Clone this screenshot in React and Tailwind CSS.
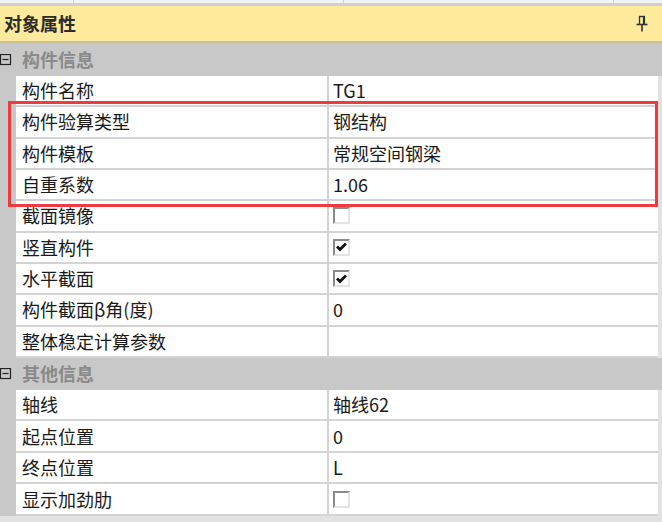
import { Fragment } from "react";

const font = { fontFamily: '"Noto Sans CJK SC", "Noto Sans", sans-serif' };

const groups = [
  {
    title: "构件信息",
    rowH: "h-[31.33px]",
    rows: [
      { name: "构件名称", value: "TG1" },
      { name: "构件验算类型", value: "钢结构", mark: "start" },
      { name: "构件模板", value: "常规空间钢梁" },
      { name: "自重系数", value: "1.06", mark: "end" },
      { name: "截面镜像", check: false },
      { name: "竖直构件", check: true },
      { name: "水平截面", check: true },
      { name: "构件截面β角(度)", value: "0" },
      { name: "整体稳定计算参数", value: "" },
    ],
  },
  {
    title: "其他信息",
    rowH: "h-[31.5px]",
    rows: [
      { name: "轴线", value: "轴线62" },
      { name: "起点位置", value: "0" },
      { name: "终点位置", value: "L" },
      { name: "显示加劲肋", check: false },
    ],
  },
];

function Checkbox({ checked }) {
  return (
    <span className="w-[17px] h-[17px] border-2 border-t-[#8a8a8a] border-l-[#8a8a8a] border-b-[#e4e4e4] border-r-[#e4e4e4] bg-white flex items-center justify-center">
      {checked && (
        <svg width="11" height="10" viewBox="0 0 11 10">
          <path d="M1 4.5 L4 7.5 L10 1.5" fill="none" stroke="#111" strokeWidth="2.8" />
        </svg>
      )}
    </span>
  );
}

function Row({ row, h }) {
  return (
    <div className={`flex ${h} bg-[#c8c8c8]`}>
      <div className="w-[16px] shrink-0" />
      <div className="flex flex-1 bg-white border-b-2 border-[#d3d3d3]">
        <div className="w-[313px] shrink-0 flex items-center pl-[6px] border-r-2 border-[#d3d3d3] text-[18px] text-[#1a1a1a]">
          {row.name}
        </div>
        <div className="flex-1 flex items-center pl-[4px] text-[18px] text-[#1a1a1a]">
          {"check" in row ? <Checkbox checked={row.check} /> : row.value}
        </div>
      </div>
      <div className="w-[4px] shrink-0 bg-[#e2e2e2]" />
    </div>
  );
}

function GroupHeader({ title, h }) {
  return (
    <div className={`flex items-center ${h} bg-[#c8c8c8]`}>
      <svg width="12" height="12" viewBox="0 0 12 12" className="shrink-0">
        <rect x="0.5" y="0.5" width="10" height="10" fill="none" stroke="#222" strokeWidth="1.2" />
        <path d="M2.5 5.5 H8.5" stroke="#222" strokeWidth="1.2" />
      </svg>
      <span className="ml-[10px] text-[18px] font-bold text-[#8a8a8a]">{title}</span>
    </div>
  );
}

export default function App() {
  return (
    <div className="w-[662px] h-[522px] overflow-hidden bg-[#e2e2e2]" style={font}>
      {/* tab strip remnant */}
      <div className="h-[3px] bg-[#f4f4f4] flex">
        <div className="ml-[73px] w-px bg-[#e6d270]" />
        <div className="ml-[269px] w-px bg-[#e6d270]" />
        <div className="ml-[269px] w-px bg-[#e6d270]" />
      </div>
      <div className="h-[3px] bg-[#cfcfcf]" />

      {/* title bar */}
      <div className="h-[37px] bg-[#fdea9d] border-b-2 border-[#c9c09a] flex items-center justify-between pl-[4px] pr-[14px]">
        <span className="text-[18px] font-bold text-[#2b2b2b]">对象属性</span>
        <svg width="12" height="17" viewBox="0 0 12 17">
          <path d="M3 1.5 H9" stroke="#333" strokeWidth="1.4" />
          <path d="M3.5 1.5 V9" stroke="#333" strokeWidth="1.3" />
          <path d="M8 1.5 V9" stroke="#333" strokeWidth="2.2" />
          <path d="M0.5 9.5 H11.5" stroke="#333" strokeWidth="1.6" />
          <path d="M6 10 V16.5" stroke="#333" strokeWidth="1.6" />
        </svg>
      </div>

      {groups.map((g, gi) => (
        <Fragment key={g.title}>
          <GroupHeader title={g.title} h={gi === 0 ? "h-[33px]" : "h-[32px]"} />
          {(() => {
            const out = [];
            let i = 0;
            while (i < g.rows.length) {
              const r = g.rows[i];
              if (r.mark === "start") {
                const block = [];
                while (i < g.rows.length) {
                  block.push(g.rows[i]);
                  if (g.rows[i].mark === "end") {
                    i++;
                    break;
                  }
                  i++;
                }
                out.push(
                  <div key={"b" + i} className="relative">
                    {block.map((br) => (
                      <Row key={br.name} row={br} h={g.rowH} />
                    ))}
                    <div className="absolute left-[8px] right-[4px] top-[-6px] bottom-[-6px] border-[3px] border-[#ee3b40] pointer-events-none" />
                  </div>
                );
              } else {
                out.push(<Row key={r.name} row={r} h={g.rowH} />);
                i++;
              }
            }
            return out;
          })()}
        </Fragment>
      ))}
    </div>
  );
}
